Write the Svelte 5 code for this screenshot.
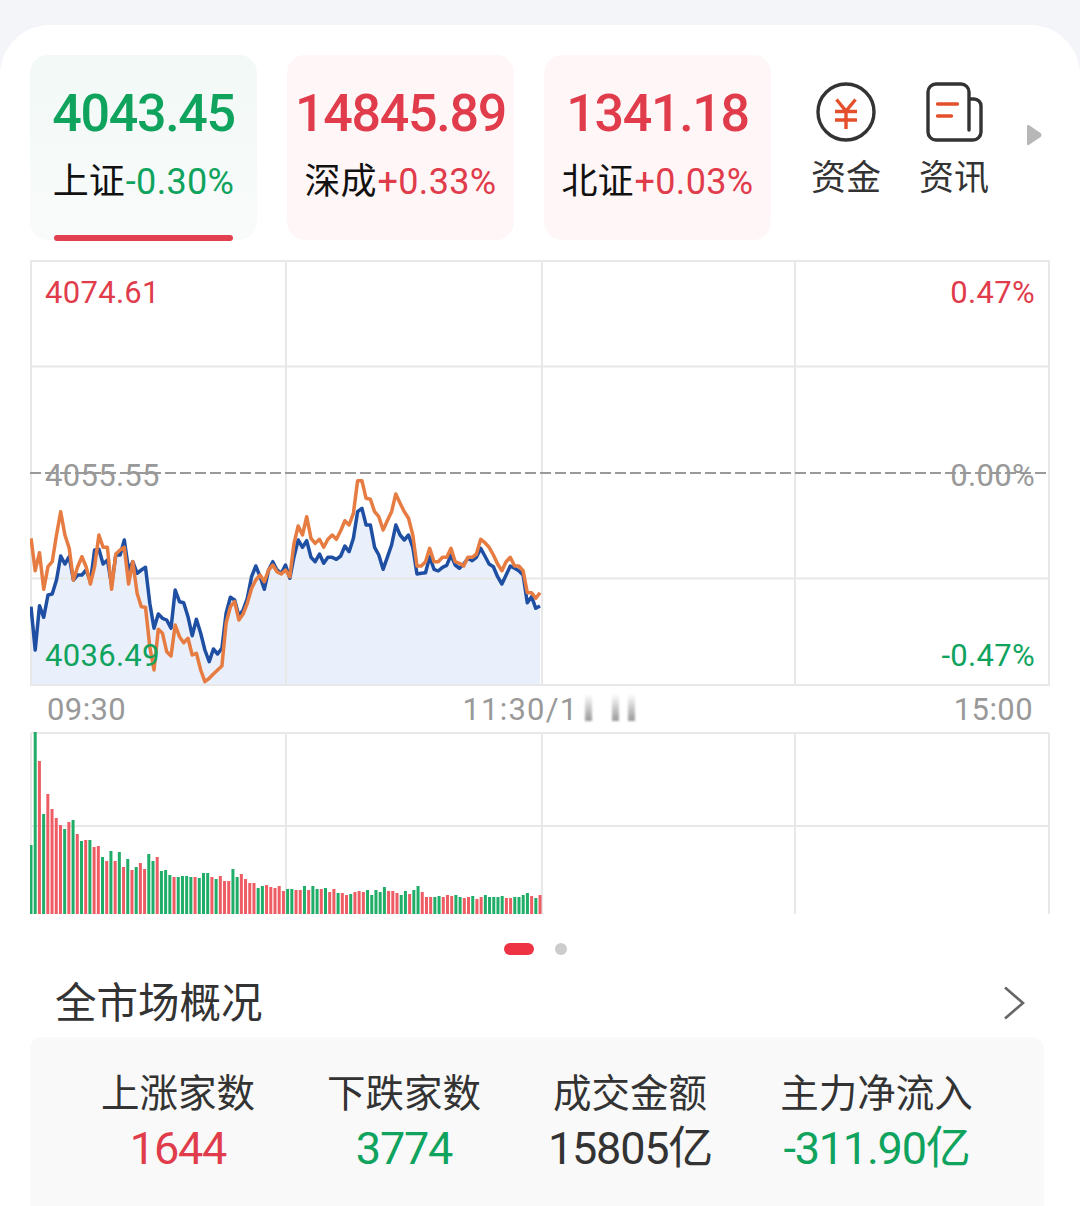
<script lang="ts">
  const tabs = [
    { value: "4043.45", name: "上证", change: "-0.30%", dir: "down", active: true },
    { value: "14845.89", name: "深成", change: "+0.33%", dir: "up", active: false },
    { value: "1341.18", name: "北证", change: "+0.03%", dir: "up", active: false }
  ];

  const stats = [
    { label: "上涨家数", value: "1644", cls: "up" },
    { label: "下跌家数", value: "3774", cls: "down" },
    { label: "成交金额", value: "15805亿", cls: "flat" },
    { label: "主力净流入", value: "-311.90亿", cls: "down" }
  ];

  // y samples, measured as offset*3 from the top of the dashed line area
  const blueRaw = [
    440, 570, 437, 472, 405, 402, 360, 288, 312, 290, 360, 345, 345, 330, 365, 270, 268, 312, 300, 375,
    285, 285, 240, 330, 305, 340, 330, 322, 430, 505, 462, 475, 480, 505, 390, 425, 428, 470, 527, 478,
    520, 570, 605, 567, 582, 565, 460, 412, 420, 468, 450, 415, 350, 318, 350, 388, 330, 305, 330, 340,
    315, 355, 290, 240, 262, 242, 292, 305, 282, 310, 292, 292, 298, 288, 258, 275, 235, 155, 145, 195,
    195, 262, 285, 328, 292, 255, 195, 225, 240, 225, 262, 342, 340, 338, 290, 328, 333, 322, 316, 285,
    315, 325, 312, 295, 302, 292, 265, 288, 312, 320, 350, 372, 345, 318, 325, 332, 345, 428, 410, 445, 438
  ];
  const orangeRaw = [
    235, 332, 278, 388, 320, 305, 225, 155, 225, 265, 360, 320, 290, 320, 372, 320, 225, 262, 262, 388,
    282, 270, 262, 372, 305, 400, 440, 442, 560, 630, 508, 520, 575, 588, 495, 530, 548, 535, 585, 580,
    630, 665, 655, 642, 630, 618, 490, 440, 425, 480, 462, 430, 385, 360, 345, 365, 330, 315, 335, 342,
    330, 350, 250, 198, 225, 170, 235, 250, 238, 262, 238, 225, 238, 212, 182, 195, 160, 62, 62, 115,
    118, 155, 170, 210, 182, 155, 102, 130, 155, 175, 225, 318, 318, 305, 265, 305, 305, 292, 292, 265,
    305, 310, 318, 292, 292, 282, 238, 248, 262, 285, 312, 332, 305, 292, 318, 318, 332, 398, 398, 415, 398
  ];

  const toLine = (raw: number[]) =>
    raw.map((v, i) => `${(31 + i * 4.242).toFixed(1)},${(460 + v / 3).toFixed(1)}`).join(" ");

  const bluePoints = toLine(blueRaw);
  const orangePoints = toLine(orangeRaw);
  const areaPoints = `31,684 ${bluePoints} 540,684`;

  // g = green, r = red, value = bar height in px
  const bars = [
    ["g", 69], ["g", 182], ["r", 153], ["g", 100], ["r", 120], ["r", 105], ["r", 96], ["r", 89], ["g", 85], ["r", 92],
    ["g", 94], ["r", 80], ["g", 73], ["r", 74], ["g", 74], ["r", 67], ["r", 68], ["g", 57], ["r", 53], ["g", 63],
    ["r", 53], ["g", 62], ["r", 47], ["g", 55], ["r", 44], ["g", 47], ["r", 51], ["r", 45], ["g", 60], ["g", 53],
    ["r", 57], ["g", 43], ["g", 44], ["g", 39], ["r", 37], ["g", 37], ["g", 38], ["g", 38], ["g", 37], ["r", 37],
    ["g", 36], ["g", 41], ["g", 41], ["r", 37], ["g", 35], ["r", 38], ["r", 33], ["r", 33], ["g", 45], ["g", 37],
    ["r", 40], ["r", 35], ["r", 31], ["r", 31], ["g", 26], ["g", 28], ["r", 29], ["r", 27], ["r", 26], ["r", 28],
    ["r", 23], ["g", 25],
    ["g", 25], ["r", 24], ["r", 24], ["g", 28], ["r", 24], ["g", 28], ["g", 25], ["r", 25], ["g", 26], ["r", 22],
    ["r", 25], ["g", 21], ["r", 21], ["r", 19], ["g", 20], ["r", 22], ["r", 23], ["r", 22], ["g", 24], ["g", 19],
    ["g", 24], ["g", 22], ["g", 27], ["r", 23], ["r", 23], ["r", 21], ["g", 19], ["g", 23], ["r", 20], ["g", 24],
    ["g", 28], ["r", 22], ["r", 17], ["r", 17], ["g", 17], ["g", 18], ["r", 17], ["r", 19], ["r", 18], ["g", 19],
    ["g", 17], ["r", 16], ["r", 17], ["g", 18], ["r", 15], ["r", 17], ["g", 19], ["g", 17], ["g", 17], ["g", 17],
    ["g", 18], ["r", 16], ["r", 16], ["g", 17], ["g", 17], ["g", 19], ["g", 21], ["r", 18], ["g", 16], ["r", 19]
  ] as [string, number][];
</script>

<div class="page">
  <div class="card">
    <div class="top-row">
      {#each tabs as tab}
        <div class="tab {tab.dir}">
          <div class="tab-value">{tab.value}</div>
          <div class="tab-sub"><span class="tab-name">{tab.name}</span><span class="tab-change">{tab.change}</span></div>
          {#if tab.active}<div class="tab-line"></div>{/if}
        </div>
      {/each}

      <div class="shortcut">
        <svg width="60" height="60" viewBox="0 0 60 60" fill="none">
          <circle cx="30" cy="30" r="28" stroke="#333" stroke-width="3.4" />
          <path d="M20.5 17.5 30 29 39.5 17.5M19 29.5h22M19 38h22M30 29v18" stroke="#e5502c" stroke-width="3.4" />
        </svg>
        <span>资金</span>
      </div>
      <div class="shortcut news">
        <svg width="58" height="60" viewBox="0 0 58 60" fill="none">
          <path d="M44 17h5a7 7 0 0 1 7 7v26a8 8 0 0 1-8 8H11a8 8 0 0 1-8-8V10a8 8 0 0 1 8-8h25a8 8 0 0 1 8 8v38" stroke="#333" stroke-width="3.4" stroke-linecap="round" />
          <path d="M12.5 22h20M12.5 34h14" stroke="#e5502c" stroke-width="3.4" stroke-linecap="round" />
        </svg>
        <span>资讯</span>
      </div>
      <svg class="more" width="18" height="24" viewBox="0 0 18 24">
        <path d="M2 3.500c0-1.500 1-2 2.200-1.200L15.500 10a2.500 2.500 0 0 1 0 4L4.200 21.700C3 22.500 2 22 2 20.500z" fill="#b7b7b7" />
      </svg>
    </div>

    <div class="price-chart">
      <svg width="1020" height="426" viewBox="30 260 1020 426">
        <polygon points={areaPoints} fill="#e9f0fb" />
        <g stroke="#e8e8e8" stroke-width="2" fill="none">
          <rect x="31" y="261" width="1018" height="424" />
          <path d="M286 261V685M542 261V685M795 261V685M31 366.500H1049M31 578.500H1049" />
        </g>
        <path d="M30 473H1050" stroke="#999" stroke-width="2" stroke-dasharray="11 4" />
        <polyline points={bluePoints} fill="none" stroke="#1f4fa3" stroke-width="3.500" stroke-linejoin="round" />
        <polyline points={orangePoints} fill="none" stroke="#e67c41" stroke-width="3.500" stroke-linejoin="round" />
      </svg>
      <span class="axis up tl">4074.61</span>
      <span class="axis up tr">0.47%</span>
      <span class="axis flat ml">4055.55</span>
      <span class="axis flat mr">0.00%</span>
      <span class="axis down bl">4036.49</span>
      <span class="axis down br">-0.47%</span>
    </div>

    <div class="time-axis">
      <span class="t-open">09:30</span>
      <span class="t-mid">11:30/1<i class="smear s1"></i><i class="smear s2"></i><i class="smear s3"></i></span>
      <span class="t-close">15:00</span>
    </div>

    <svg class="volume" width="1020" height="182" viewBox="30 732 1020 182">
      <path d="M31 733H1049M31 826H1049M31 733V914M286 733V914M542 733V914M795 733V914M1049 733V914" stroke="#e8e8e8" stroke-width="2" fill="none" />
      {#each bars as [c, h], i}
        <rect x={29.500 + i * 4.207} y={914 - h} width="3" height={h} fill={c === "g" ? "#1fad68" : "#ee5c64"} />
      {/each}
    </svg>

    <div class="pager">
      <span class="pill"></span>
      <span class="dot"></span>
    </div>

    <div class="section-head">
      <span>全市场概况</span>
      <svg width="22" height="34" viewBox="0 0 22 34" fill="none">
        <path d="M2 1.500 20 17 2 32.500" stroke="#666" stroke-width="2.600" />
      </svg>
    </div>

    <div class="stats">
      {#each stats as s}
        <div class="stat">
          <span class="stat-label">{s.label}</span>
          <span class="stat-value {s.cls}">{s.value}</span>
        </div>
      {/each}
    </div>
  </div>
</div>

<style>
  :global(body) {
    margin: 0;
    background: #fff;
  }

  .page {
    width: 1080px;
    height: 1206px;
    box-sizing: border-box;
    padding-top: 25px;
    overflow: hidden;
    background: #f3f5f9;
    font-family: Roboto, "Noto Sans CJK SC", sans-serif;
  }

  .card {
    height: 1181px;
    box-sizing: border-box;
    padding: 30px 30px 0;
    background: #fff;
    border-radius: 50px 50px 0 0;
  }

  .up { color: #e03c4b; }
  .down { color: #0fa35e; }
  .flat { color: #999; }

  .top-row {
    display: flex;
    align-items: flex-start;
    gap: 30px;
    height: 185px;
  }

  .tab {
    position: relative;
    width: 227px;
    height: 185px;
    border-radius: 18px;
    display: flex;
    flex-direction: column;
    align-items: center;
  }

  .tab.down { background: linear-gradient(#f2f9f6, #f9fbfb); }
  .tab.up { background: #fff7f7; }

  .tab-value {
    margin-top: 28px;
    font-size: 52px;
    line-height: 62px;
    font-weight: 500;
    letter-spacing: -1.300px;
  }

  .tab-sub {
    margin-top: 12px;
    display: flex;
    align-items: center;
    line-height: 50px;
  }

  .tab-name {
    font-size: 36px;
    color: #111;
  }

  .tab-change {
    font-size: 36px;
    letter-spacing: 0.300px;
    margin-left: 1px;
  }

  .tab-line {
    position: absolute;
    left: 24px;
    bottom: -1px;
    width: 179px;
    height: 6px;
    border-radius: 3px;
    background: #e2404e;
  }

  .shortcut {
    display: flex;
    flex-direction: column;
    align-items: center;
    width: 70px;
    margin-left: 10px;
    padding-top: 27px;
    color: #333;
    font-size: 35px;
    line-height: 50px;
  }

  .shortcut svg { margin-bottom: 12px; }

  .shortcut.news {
    margin-left: 8px;
  }

  .more {
    margin: 68px 0 0 6px;
  }

  .price-chart {
    position: relative;
    width: 1020px;
    height: 426px;
    margin-top: 20px;
  }

  .price-chart svg { display: block; }

  .axis {
    position: absolute;
    font-size: 31px;
    line-height: 36px;
    letter-spacing: 0.300px;
  }

  .tl { left: 15px; top: 15px; }
  .tr { right: 15px; top: 15px; }
  .ml { left: 15px; top: 198px; }
  .mr { right: 15px; top: 198px; }
  .bl { left: 15px; top: 378px; }
  .br { right: 15px; top: 378px; }

  .time-axis {
    display: flex;
    justify-content: space-between;
    height: 46px;
    padding: 0 17px;
    color: #999;
    font-size: 31px;
    line-height: 48px;
    letter-spacing: 0.400px;
  }

  .t-mid {
    position: relative;
    margin-left: 17px;
    width: 172px;
    letter-spacing: 1.200px;
  }

  .smear {
    position: absolute;
    top: 8px;
    width: 7px;
    height: 27px;
    background: linear-gradient(transparent, #999);
    filter: blur(1px);
  }

  .s1 { left: 122px; }
  .s2 { left: 149px; }
  .s3 { left: 165px; }

  .volume { display: block; }

  .pager {
    display: flex;
    align-items: center;
    justify-content: center;
    gap: 21px;
    height: 12px;
    margin-top: 29px;
    padding-right: 9px;
  }

  .pill {
    width: 30px;
    height: 12px;
    border-radius: 6px;
    background: #ee3344;
  }

  .dot {
    width: 12px;
    height: 12px;
    border-radius: 50%;
    background: #ccc;
  }

  .section-head {
    display: flex;
    align-items: center;
    justify-content: space-between;
    height: 60px;
    margin-top: 15px;
    padding: 0 25px;
    color: #333;
    font-size: 41.500px;
  }

  .section-head svg { margin-top: 6px; }

  .stats {
    display: grid;
    grid-template-columns: 154px 154px 154px 195px;
    gap: 72px;
    width: 1014px;
    height: 169px;
    box-sizing: border-box;
    margin-top: 7px;
    padding: 30px 0 0 71px;
    background: #f9f9f9;
    border-radius: 12px 12px 0 0;
  }

  .stat {
    display: flex;
    flex-direction: column;
    align-items: center;
  }

  .stat-label {
    color: #333;
    font-size: 38.500px;
    line-height: 54px;
    white-space: nowrap;
  }

  .stat-value {
    margin-top: -1px;
    font-size: 45px;
    line-height: 58px;
    letter-spacing: -1.200px;
    white-space: nowrap;
  }

  .stat-value.flat { color: #333; }
</style>
